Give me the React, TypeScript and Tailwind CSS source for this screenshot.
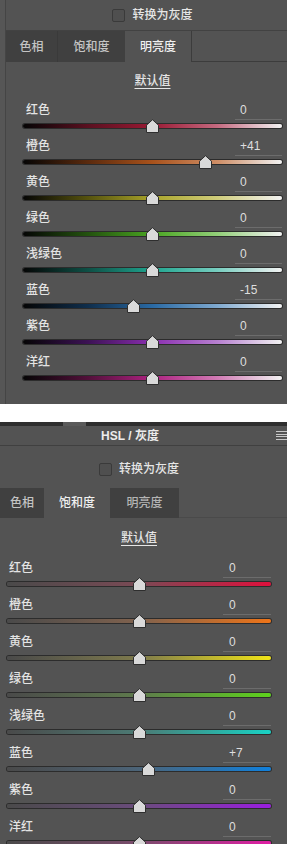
import React from "react";

type Row = { n: string; v: number; g: string };

const lum: Row[] = [
  { n: "红色", v: 0, g: "linear-gradient(to right,#050505 0%,#5a1020 25%,#9a1a34 50%,#c56a80 75%,#f2f2f2 100%)" },
  { n: "橙色", v: 41, g: "linear-gradient(to right,#050505 0%,#5a2a0e 25%,#a8521c 50%,#cf8e66 75%,#f2f2f2 100%)" },
  { n: "黄色", v: 0, g: "linear-gradient(to right,#050505 0%,#55520e 25%,#a9a42a 50%,#cfcc7a 75%,#f2f2f2 100%)" },
  { n: "绿色", v: 0, g: "linear-gradient(to right,#050505 0%,#23520e 25%,#4aa522 50%,#92cf78 75%,#f2f2f2 100%)" },
  { n: "浅绿色", v: 0, g: "linear-gradient(to right,#050505 0%,#0e4f45 25%,#1fa58f 50%,#77cdbf 75%,#f2f2f2 100%)" },
  { n: "蓝色", v: -15, g: "linear-gradient(to right,#050505 0%,#0f2e4c 25%,#2a6aa4 50%,#7fa9cf 75%,#f2f2f2 100%)" },
  { n: "紫色", v: 0, g: "linear-gradient(to right,#050505 0%,#3c1254 25%,#8a2eb0 50%,#b780d0 75%,#f2f2f2 100%)" },
  { n: "洋红", v: 0, g: "linear-gradient(to right,#050505 0%,#52103a 25%,#ad2280 50%,#d07ab4 75%,#f2f2f2 100%)" },
];

const sat: Row[] = [
  { n: "红色", v: 0, g: "linear-gradient(to right,#4a4a4a 0%,#7a4a55 50%,#e0103c 100%)" },
  { n: "橙色", v: 0, g: "linear-gradient(to right,#4a4a4a 0%,#80624e 50%,#ee7418 100%)" },
  { n: "黄色", v: 0, g: "linear-gradient(to right,#4a4a4a 0%,#7e7a4c 50%,#f0e418 100%)" },
  { n: "绿色", v: 0, g: "linear-gradient(to right,#4a4a4a 0%,#5e7a4c 50%,#5ed21c 100%)" },
  { n: "浅绿色", v: 0, g: "linear-gradient(to right,#4a4a4a 0%,#4c7a74 50%,#18d2c4 100%)" },
  { n: "蓝色", v: 7, g: "linear-gradient(to right,#4a4a4a 0%,#4c6478 50%,#1080dc 100%)" },
  { n: "紫色", v: 0, g: "linear-gradient(to right,#4a4a4a 0%,#6a4c7c 50%,#9a1ee0 100%)" },
  { n: "洋红", v: 0, g: "linear-gradient(to right,#4a4a4a 0%,#7a4c6c 50%,#e01ea4 100%)" },
];

function Thumb() {
  return (
    <svg width="13" height="14" viewBox="0 0 13 14">
      <path d="M6.5 0.7 L12.5 6.2 V13.5 H0.5 V6.2 Z" fill="#d9d9d9" stroke="#2e2e2e" strokeWidth="1" />
    </svg>
  );
}

function fmt(v: number) {
  return v > 0 ? `+${v}` : `${v}`;
}

function SliderRow({ r, h, valW, valPl, labelPl }: { r: Row; h: string; valW: string; valPl: string; labelPl: string }) {
  const pct = (r.v + 100) / 2;
  return (
    <div className={`flex shrink-0 flex-col ${h}`}>
      <div className="flex h-[20px] shrink-0 items-center justify-between">
        <span className={`${labelPl} text-[12px] font-medium leading-none text-[#e4e4e4]`}>{r.n}</span>
        <div className={`${valW} ${valPl} flex h-[20px] items-center border-b border-[#6c6c6c] text-[12px] leading-none text-[#dedede]`}>
          {fmt(r.v)}
        </div>
      </div>
      <div className="relative h-[12px] shrink-0">
        <div
          className="absolute left-0 right-0 top-[4px] h-[4px] rounded-full shadow-[0_0_0_1px_#2c2c2c]"
          style={{ backgroundImage: r.g }}
        />
        <div className="absolute top-[-1px] flex" style={{ left: `calc(${pct}% - 6.5px)` }}>
          <Thumb />
        </div>
      </div>
    </div>
  );
}

function CheckRow() {
  return (
    <div className="flex items-center justify-center gap-[7px]">
      <div className="h-[13px] w-[13px] rounded-[2px] border border-[#3a3a3a] bg-[#4f4f4f]" />
      <span className="text-[12px] font-medium leading-none text-[#e6e6e6]">转换为灰度</span>
    </div>
  );
}

function Defaults() {
  return <span className="text-[12px] font-medium leading-none text-[#e6e6e6] underline underline-offset-[3px]">默认值</span>;
}

export default function App() {
  return (
    <div className="h-[844px] w-[287px] overflow-hidden bg-white font-['Liberation_Sans','Noto_Sans_CJK_SC',sans-serif]">
      {/* Panel 1 */}
      <div className="flex h-[404px] overflow-hidden bg-[#535353]">
        <div className="w-[5px] bg-[#565656]" />
        <div className="flex flex-1 flex-col border-l border-[#454545]">
          <div className="flex h-[30px] shrink-0 items-center justify-center pl-[17px] pr-[5px]">
            <CheckRow />
          </div>
          <div className="flex h-[32px] shrink-0 border-t border-[#424242]">
            <div className="flex w-[52px] items-center justify-center border-r border-[#3a3a3a] bg-[#404040] text-[12px] font-medium text-[#c4c4c4]">色相</div>
            <div className="flex w-[67px] items-center justify-center bg-[#404040] text-[12px] font-medium text-[#c4c4c4]">饱和度</div>
            <div className="flex w-[66px] items-center justify-center text-[12px] font-medium text-[#f0f0f0]">明亮度</div>
            <div className="flex-1 border-b border-l border-[#3c3c3c]" />
          </div>
          <div className="flex shrink-0 flex-col pl-[17px] pr-[5px]">
            <div className="flex h-[38px] shrink-0 items-center justify-center">
              <Defaults />
            </div>
            {lum.map((r) => (
              <SliderRow key={r.n} r={r} h="h-[36px]" valW="w-[47px]" valPl="pl-[5px]" labelPl="pl-[3px]" />
            ))}
          </div>
        </div>
      </div>

      <div className="h-[18px] bg-white" />

      {/* Panel 2 */}
      <div className="flex h-[422px] flex-col overflow-hidden bg-[#535353]">
        <div className="flex h-[4px] shrink-0">
          <div className="w-[63px] bg-[#2e2e2e]" />
          <div className="w-[23px] bg-[#5a5a5a]" />
          <div className="flex-1 bg-[#2e2e2e]" />
        </div>
        <div className="flex h-[20px] shrink-0 items-center border-b border-[#404040]">
          <div className="flex flex-1 justify-center pr-[16px] text-[12px] font-bold leading-none text-[#ececec]">HSL / 灰度</div>
          <div className="flex w-[11px] flex-col gap-[1.5px]">
            <div className="h-[1px] bg-[#c8c8c8]" />
            <div className="h-[1px] bg-[#c8c8c8]" />
            <div className="h-[1px] bg-[#c8c8c8]" />
            <div className="h-[1px] bg-[#c8c8c8]" />
          </div>
        </div>
        <div className="flex h-[42px] shrink-0 items-center justify-center pl-[7px] pr-[16px] pt-[4px]">
          <CheckRow />
        </div>
        <div className="flex h-[30px] shrink-0">
          <div className="flex w-[44px] items-center justify-center bg-[#404040] text-[12px] font-medium text-[#c4c4c4]">色相</div>
          <div className="flex w-[66px] items-center justify-center text-[12px] font-medium text-[#f0f0f0]">饱和度</div>
          <div className="flex w-[69px] items-center justify-center bg-[#404040] text-[12px] font-medium text-[#b4b4b4]">明亮度</div>
          <div className="flex-1 border-b border-[#4a4a4a]" />
        </div>
        <div className="flex shrink-0 flex-col pl-[7px] pr-[16px]">
          <div className="flex h-[40px] shrink-0 items-center justify-center">
            <Defaults />
          </div>
          {sat.map((r) => (
            <SliderRow key={r.n} r={r} h="h-[37px]" valW="w-[48px]" valPl="pl-[6px]" labelPl="pl-[2px]" />
          ))}
        </div>
      </div>
    </div>
  );
}
